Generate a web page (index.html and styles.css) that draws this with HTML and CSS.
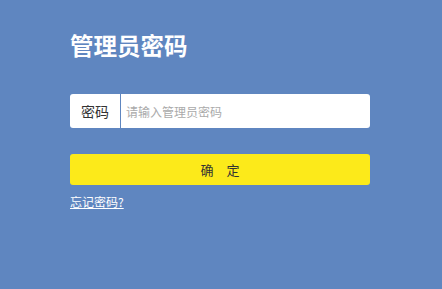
FILE: index.html
```html
<!DOCTYPE html>
<html lang="zh">
<head>
<meta charset="utf-8">
<link rel="stylesheet" href="styles.css">
</head>
<body>
<div class="panel">
  <h1 class="title">管理员密码</h1>
  <div class="field">
    <span class="field-label">密码</span>
    <input class="field-input" type="password" placeholder="请输入管理员密码">
  </div>
  <button class="btn">确&emsp;定</button>
  <a class="forgot" href="#">忘记密码?</a>
</div>
</body>
</html>
```

FILE: styles.css
```css
html, body {
  margin: 0;
  padding: 0;
}
body {
  background: #5f86c0;
  width: 442px;
  height: 289px;
  font-family: "Noto Sans CJK SC", "Liberation Sans", sans-serif;
  overflow: hidden;
}
.panel {
  width: 300px;
  margin-left: 70px;
  padding-top: 30px;
  display: flex;
  flex-direction: column;
}
.title {
  margin: 0;
  color: #fff;
  font-size: 23.5px;
  font-weight: bold;
  line-height: 30px;
  height: 30px;
}
.field {
  margin-top: 34px;
  height: 34px;
  background: #fff;
  border-radius: 3px;
  display: flex;
  align-items: stretch;
}
.field-label {
  width: 50px;
  flex: none;
  border-right: 1px solid #5f86c0;
  display: flex;
  align-items: center;
  justify-content: center;
  font-size: 14px;
  color: #333;
}
.field-input {
  flex: 1;
  border: none;
  outline: none;
  background: transparent;
  padding: 0 0 0 5px;
  font-family: inherit;
  font-size: 12px;
  color: #333;
}
.field-input::placeholder {
  color: #aaa;
}
.btn {
  margin-top: 26px;
  height: 31px;
  border: none;
  border-radius: 3px;
  background: #fcea1a;
  color: #333;
  font-family: inherit;
  font-size: 13px;
  padding: 0;
}
.forgot {
  margin-top: 8px;
  align-self: flex-start;
  color: #fff;
  font-size: 12px;
  line-height: 17px;
  text-decoration: underline;
}
```
